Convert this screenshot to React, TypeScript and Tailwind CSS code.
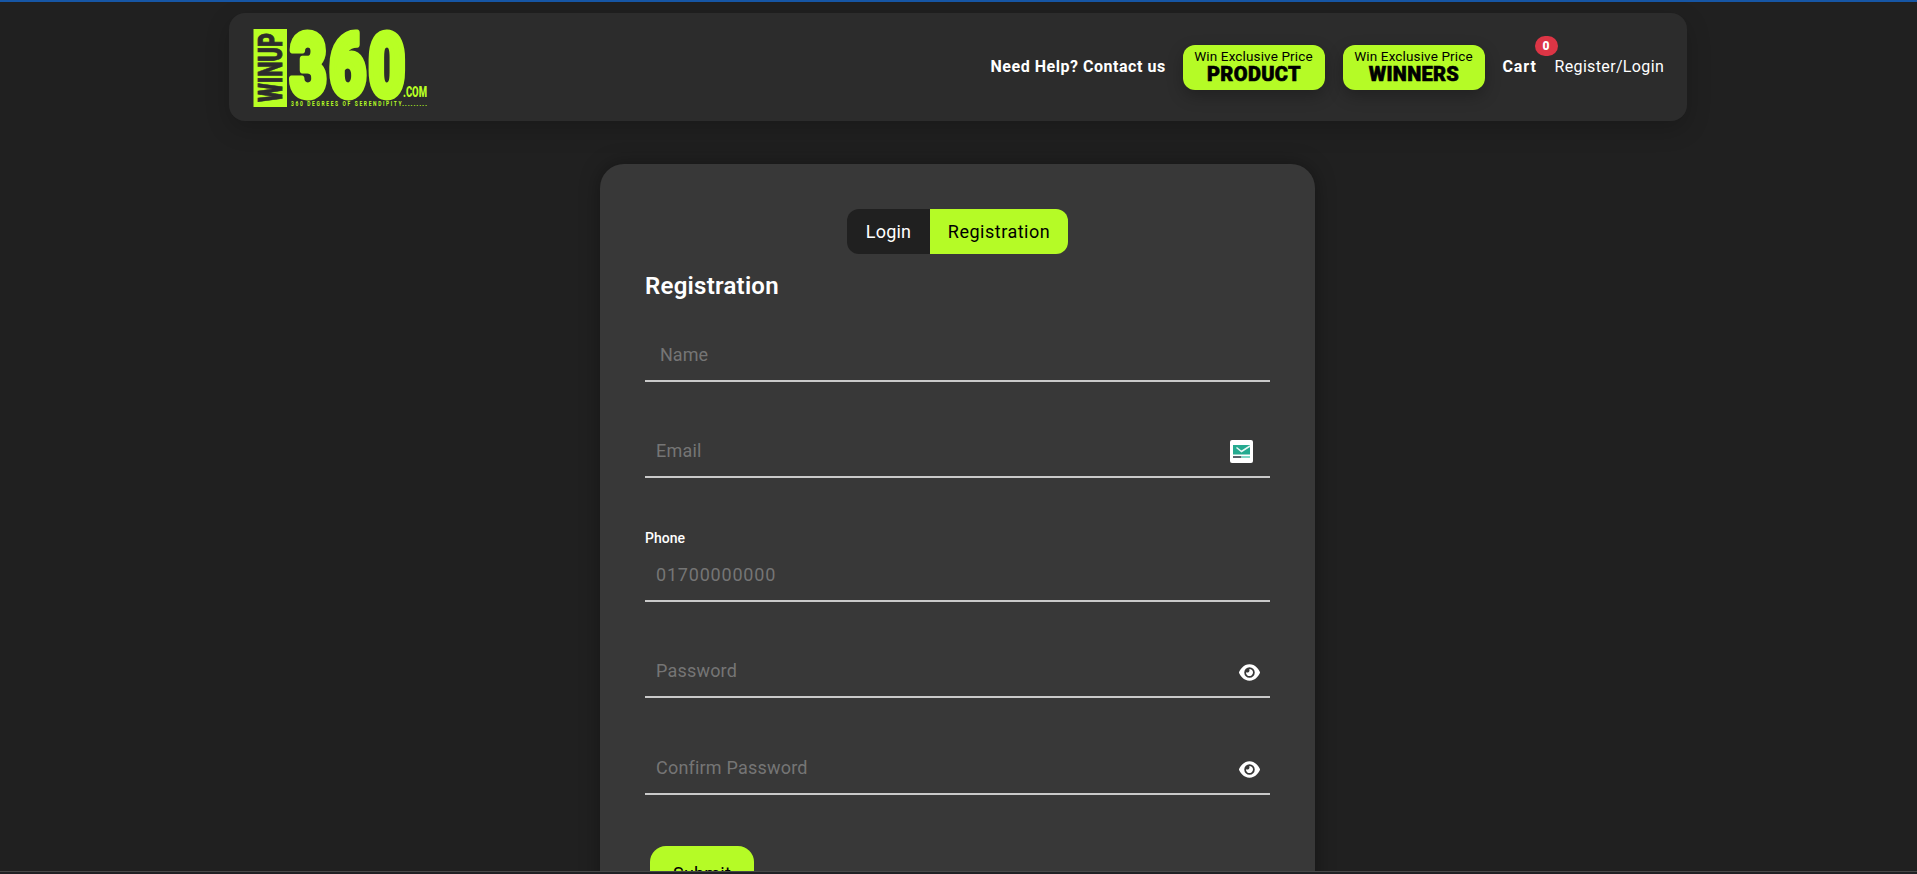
import type { ReactNode } from "react";
import { FaEye } from "react-icons/fa6";

function Logo() {
  return (
    <svg width="176" height="82" viewBox="0 0 176 82" className="block overflow-visible" aria-label="Winup 360">
      <rect x="0.5" y="3" width="33.5" height="78" fill="#b8ff24" />
      <text
        transform="translate(29 76) rotate(-90)"
        textLength="69"
        lengthAdjust="spacingAndGlyphs"
        strokeWidth="0.8"
        stroke="#2c2c2c"
        className="fill-[#2c2c2c] font-['Roboto'] text-[33px] font-black"
      >
        WINUP
      </text>
      <text
        transform="translate(37 69.5) scale(0.72 1)"
        x="0 54.5 109"
        strokeWidth="7"
        stroke="#b8ff24"
        strokeLinejoin="round"
        className="fill-[#b8ff24] font-['Roboto'] text-[88px] font-black"
      >
        360
      </text>
      <text
        x="150"
        y="71"
        textLength="24"
        lengthAdjust="spacingAndGlyphs"
        className="fill-[#b8ff24] font-['Roboto'] text-[14.5px] font-black"
      >
        .COM
      </text>
      <text
        transform="translate(38 80) scale(0.7 1)"
        textLength="158"
        lengthAdjust="spacing"
        className="fill-[#b8ff24] font-['Roboto'] text-[7px] font-bold"
      >
        360 DEGREES OF SERENDIPITY
      </text>
      <text
        x="149"
        y="79.5"
        textLength="25"
        lengthAdjust="spacing"
        className="fill-[#b8ff24] font-['Roboto'] text-[7px] font-bold"
      >
        .........
      </text>
    </svg>
  );
}

function PriceButton({ label, tracking }: { label: string; tracking: string }) {
  return (
    <a className="flex h-[45px] w-[142px] flex-col items-center rounded-xl bg-[#b5fb26] pt-[3px] text-black shadow-[0_6px_16px_rgba(0,0,0,0.25)]">
      <span className="text-[13.5px] leading-4 tracking-[0.14px]">Win Exclusive Price</span>
      <span className={`pl-px text-[20px] leading-[21px] font-black [-webkit-text-stroke:0.6px_#000] ${tracking}`}>
        {label}
      </span>
    </a>
  );
}

function Field({
  placeholder,
  className,
  tracking = "tracking-[0.2px]",
  children,
}: {
  placeholder: string;
  className: string;
  tracking?: string;
  children?: ReactNode;
}) {
  return (
    <div className={`flex h-[54px] items-center justify-between border-b-2 border-[#c9c9c9] pt-0.5 ${className}`}>
      <input
        placeholder={placeholder}
        className={`min-w-0 flex-1 bg-transparent text-[18px] leading-6 text-white outline-none placeholder:text-[#757575] ${tracking}`}
      />
      {children}
    </div>
  );
}

function MailBadge() {
  return (
    <svg width="23" height="23" viewBox="0 0 23 23" className="mt-px mr-[17px]">
      <rect width="23" height="23" rx="2" fill="#fff" />
      <rect x="3" y="5" width="17" height="9.5" fill="#25aa90" />
      <path d="M6.5 7.5 11.5 11.5 20 6" fill="none" stroke="#e9f7f4" strokeWidth="1.5" />
      <path d="M3 17h8.5" stroke="#5a626b" strokeWidth="2" />
      <path d="M11.5 17H20" stroke="#7fd6c5" strokeWidth="2" />
    </svg>
  );
}

export default function App() {
  return (
    <div className="flex h-[874px] w-full flex-col overflow-hidden bg-[#202020] font-['Roboto','Noto_Sans',sans-serif] text-white">
      <div className="h-0.5 shrink-0 bg-[#1656a5]" />
      <div className="flex min-h-0 flex-1 flex-col items-center overflow-hidden pt-[11px] pr-[2px]">
        <header className="flex h-[108px] w-[1458px] shrink-0 items-center justify-between rounded-2xl bg-[#2c2c2c] pr-[23px] pl-6 shadow-[0_8px_24px_rgba(0,0,0,0.2)]">
          <Logo />
          <nav className="flex items-center gap-[18px] text-base">
            <a className="w-[174px] font-bold tracking-[0.53px] whitespace-nowrap">Need Help? Contact us</a>
            <PriceButton label="PRODUCT" tracking="tracking-[0.35px]" />
            <PriceButton label="WINNERS" tracking="tracking-[0.3px]" />
            <a className="relative w-[34px] font-bold tracking-[0.9px] whitespace-nowrap">
              Cart
              <span className="absolute -top-[19px] left-8 flex h-5 w-[23px] items-center justify-center rounded-full bg-[#dc3545] text-xs font-black tracking-normal">
                0
              </span>
            </a>
            <a className="w-[109px] tracking-[0.35px] whitespace-nowrap">Register/Login</a>
          </nav>
        </header>

        <main className="mt-[43px] flex h-[900px] w-[715px] shrink-0 flex-col rounded-t-3xl bg-[#383838] px-[45px] pt-[45px] shadow-[0_0_20px_rgba(0,0,0,0.35)]">
          <div className="flex h-[45px] w-[221px] shrink-0 self-center overflow-hidden rounded-xl text-[18px]">
            <button className="w-[83px] bg-[#202020] tracking-[0.2px]">Login</button>
            <button className="flex-1 bg-[#b5fb26] tracking-[0.5px] text-black">Registration</button>
          </div>
          <h1 className="mt-4 h-8 text-2xl leading-8 font-semibold tracking-[0.25px]">Registration</h1>
          <Field placeholder="Name" className="mt-[26px] pl-[15px]" tracking="tracking-normal" />
          <Field placeholder="Email" className="mt-[42px] pl-[11px]">
            <MailBadge />
          </Field>
          <label className="mt-[50px] h-5 text-sm leading-5 font-medium">Phone</label>
          <Field placeholder="01700000000" className="pl-[11px]" tracking="tracking-[0.8px]" />
          <Field placeholder="Password" className="mt-[42px] pl-[11px]">
            <FaEye className="mt-0.5 mr-[10px] text-[21px]" />
          </Field>
          <Field placeholder="Confirm Password" className="mt-[43px] pl-[11px]">
            <FaEye className="mt-0.5 mr-[10px] text-[21px]" />
          </Field>
          <button className="mt-[51px] ml-[5px] h-[50px] w-[104px] shrink-0 rounded-2xl bg-[#b5fb26] pt-1 text-[18px] tracking-[0.2px] text-black">
            Submit
          </button>
        </main>
      </div>
      <div className="h-[3px] shrink-0 border-t border-[#484848] bg-[#202124]" />
    </div>
  );
}
